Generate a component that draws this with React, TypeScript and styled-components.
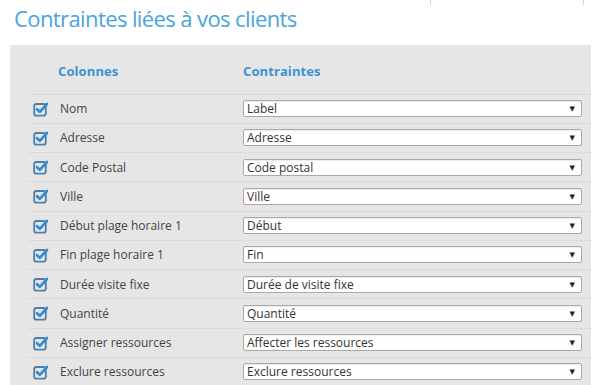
import React from 'react';
import styled, { createGlobalStyle } from 'styled-components';

const GlobalStyle = createGlobalStyle`
  html, body {
    margin: 0;
    padding: 0;
    background: #ffffff;
    font-family: 'Open Sans', 'DejaVu Sans', sans-serif;
  }
`;

const Page = styled.div`
  width: 600px;
  height: 385px;
  overflow: hidden;
  position: relative;
  background: #fff;
`;

const TopTab = styled.div`
  position: absolute;
  top: 0;
  left: 430px;
  width: 152px;
  height: 5px;
  border-left: 1px solid #d4d4d4;
  border-right: 1px solid #d4d4d4;
`;

const Title = styled.h1`
  margin: 0;
  padding: 3px 0 0 14px;
  height: 45px;
  box-sizing: border-box;
  font-size: 22px;
  font-weight: 400;
  letter-spacing: -0.6px;
  color: #4ba3dc;
  line-height: 30px;
`;

const Panel = styled.div`
  margin-left: 10px;
  width: 581px;
  background: #e6e6e6;
  padding: 0 0 0 19px;
  box-sizing: border-box;
  height: 340px;
`;

const HeaderRow = styled.div`
  display: grid;
  grid-template-columns: 214px 1fr;
  height: 49.5px;
  align-items: center;
  padding-top: 3px;
  box-sizing: border-box;
  border-bottom: 1px dotted #cfcfcf;
`;

const HeaderCell = styled.div<{ $indent: number }>`
  padding-left: ${({ $indent }) => $indent}px;
  font-size: 13px;
  font-weight: 700;
  letter-spacing: 0.1px;
  color: #3b93d3;
`;

const Row = styled.div`
  display: grid;
  grid-template-columns: 214px 1fr;
  align-items: center;
  height: 29.25px;
  box-sizing: border-box;
  border-bottom: 1px dotted #cfcfcf;
`;

const LabelCell = styled.label`
  display: flex;
  align-items: center;
  gap: 11px;
  padding-left: 4px;
  font-size: 12px;
  color: #444;
`;

const SelectBox = styled.div`
  display: flex;
  align-items: center;
  justify-content: space-between;
  height: 17px;
  width: 339px;
  box-sizing: border-box;
  background: #fff;
  border: 1px solid #a9a9a9;
  border-radius: 2px;
  box-shadow: inset 0 1px 1px rgba(0, 0, 0, 0.08);
  padding: 0 6px 0 3px;
  font-size: 12px;
  color: #333;
`;

const Arrow = styled.span`
  font-size: 7px;
  color: #222;
`;

const CheckIcon = () => (
  <svg width="16" height="16" viewBox="0 0 16 16">
    <rect x="1.2" y="3" width="11.6" height="11.6" rx="2.2" fill="none" stroke="#4f7fa6" strokeWidth="1.8" />
    <path d="M4 8.2 L6.8 10.8 L14 3" fill="none" stroke="#2f8bd3" strokeWidth="2.6" strokeLinecap="round" strokeLinejoin="round" />
  </svg>
);

const rows: [string, string][] = [
  ['Nom', 'Label'],
  ['Adresse', 'Adresse'],
  ['Code Postal', 'Code postal'],
  ['Ville', 'Ville'],
  ['Début plage horaire 1', 'Début'],
  ['Fin plage horaire 1', 'Fin'],
  ['Durée visite fixe', 'Durée de visite fixe'],
  ['Quantité', 'Quantité'],
  ['Assigner ressources', 'Affecter les ressources'],
  ['Exclure ressources', 'Exclure ressources'],
];

export default function App() {
  return (
    <Page>
      <GlobalStyle />
      <TopTab />
      <Title>Contraintes liées à vos clients</Title>
      <Panel>
        <HeaderRow>
          <HeaderCell $indent={29}>Colonnes</HeaderCell>
          <HeaderCell $indent={0}>Contraintes</HeaderCell>
        </HeaderRow>
        {rows.map(([label, value]) => (
          <Row key={label}>
            <LabelCell>
              <CheckIcon />
              {label}
            </LabelCell>
            <SelectBox>
              {value}
              <Arrow>▼</Arrow>
            </SelectBox>
          </Row>
        ))}
      </Panel>
    </Page>
  );
}
